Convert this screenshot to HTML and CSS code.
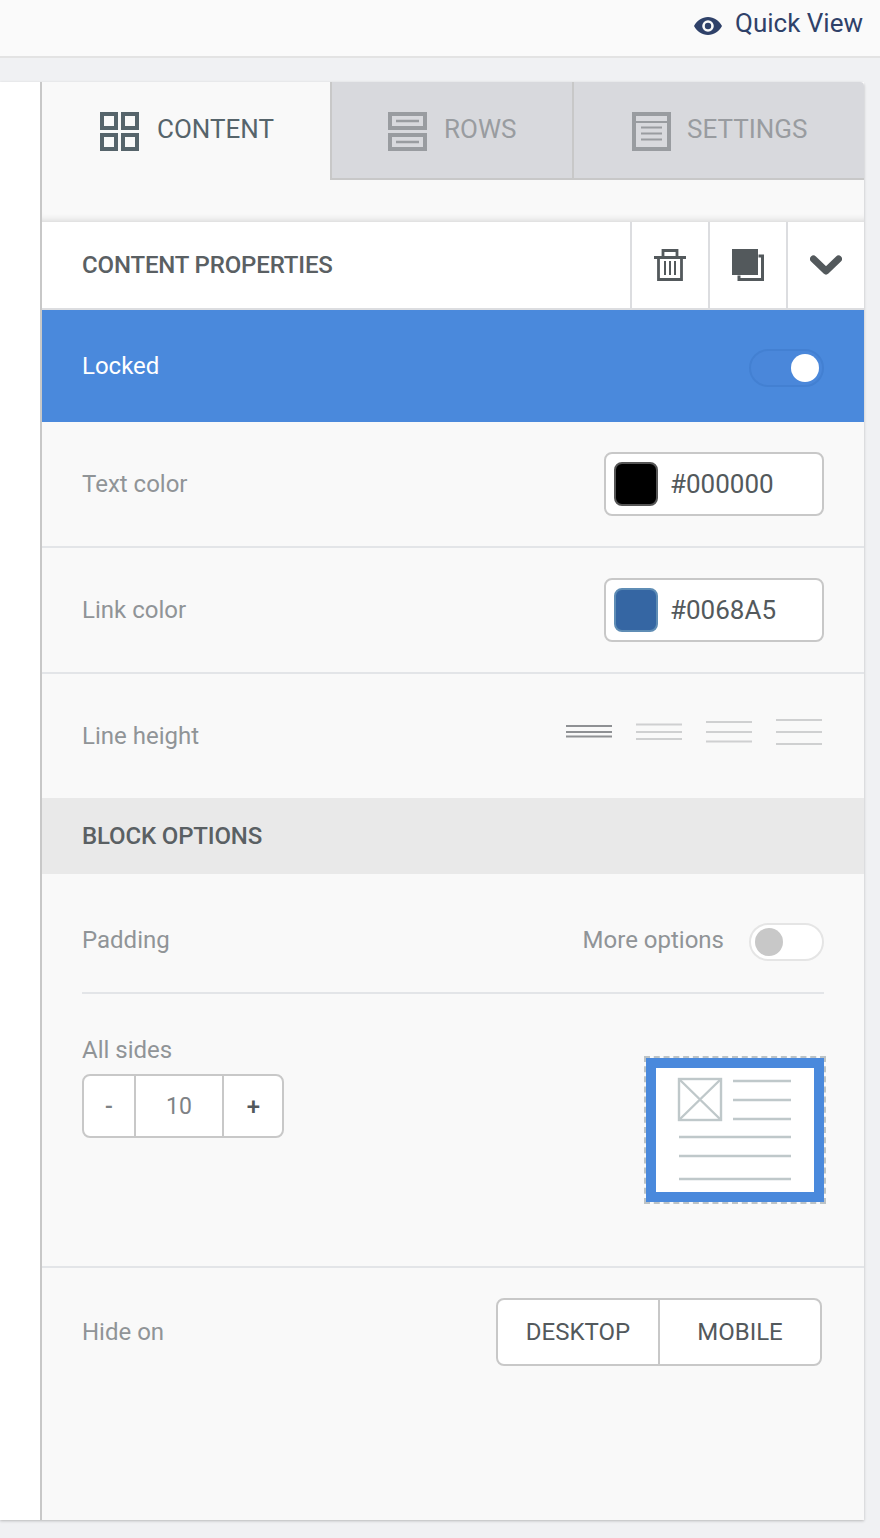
FILE: index.html
```html
<!DOCTYPE html>
<html lang="en">
<head>
<meta charset="utf-8">
<title>Content properties</title>
<link rel="stylesheet" href="styles.css">
</head>
<body>
<header class="topbar">
  <a class="quick-view">
    <svg class="eye" viewBox="0 0 28 18"><path fill="#2f4169" fill-rule="evenodd" d="M14 0C8 0 3 3.600 0 9c3 5.400 8 9 14 9s11-3.600 14-9c-3-5.400-8-9-14-9zm0 3.200a5.800 5.800 0 1 1 0 11.600 5.800 5.800 0 0 1 0-11.600z"/><circle cx="14" cy="9" r="3.200" fill="#2f4169"/></svg>
    <span>Quick View</span>
  </a>
</header>
<main class="workspace">
  <div class="canvas"></div>
  <aside class="panel">
    <nav class="tabs">
      <div class="tab tab-content active">
        <svg class="tab-icon" viewBox="0 0 39 39" fill="none" stroke="#56646b" stroke-width="4"><rect x="2" y="2" width="14" height="14"/><rect x="23" y="2" width="14" height="14"/><rect x="2" y="23" width="14" height="14"/><rect x="23" y="23" width="14" height="14"/></svg>
        <span>CONTENT</span>
      </div>
      <div class="tab tab-rows">
        <svg class="tab-icon" viewBox="0 0 39 39" fill="none" stroke="#999ca0" stroke-width="4"><rect x="2" y="2" width="35" height="14"/><rect x="2" y="23" width="35" height="14"/><path stroke-width="2.500" d="M8 9h23M8 30h23"/></svg>
        <span>ROWS</span>
      </div>
      <div class="tab tab-settings">
        <svg class="tab-icon" viewBox="0 0 39 39" fill="none" stroke="#999ca0" stroke-width="4"><rect x="2" y="2" width="35" height="35"/><path stroke-width="2" d="M3 10h33M9 15.500h21M9 21.500h21M9 27.500h21"/></svg>
        <span>SETTINGS</span>
      </div>
    </nav>
    <div class="tab-gap"></div>
    <section class="props-head">
      <h2>CONTENT PROPERTIES</h2>
      <button class="icon-btn"><svg width="32" height="32" viewBox="0 0 32 32" fill="none" stroke="#53595c" stroke-width="2.800"><path d="M0 8.500h32M9 8V1.500h14V8M4.500 8.500v22h23v-22"/><path stroke-width="2" d="M11 12v14M16 12v14M21 12v14"/></svg></button>
      <button class="icon-btn"><svg width="32" height="32" viewBox="0 0 32 32"><path fill="#53595c" d="M0 0h26v26H0z"/><path fill="none" stroke="#53595c" stroke-width="3" d="M26.500 7h4v23.500H7v-4"/></svg></button>
      <button class="icon-btn"><svg width="32" height="21" viewBox="0 0 32 21" fill="none" stroke="#53595c" stroke-width="7" stroke-linecap="round" stroke-linejoin="round"><path d="M3.500 4L16 16 28.500 4"/></svg></button>
    </section>
    <div class="locked-row">
      <span>Locked</span>
      <div class="switch switch-on"><i></i></div>
    </div>
    <div class="row color-row">
      <label>Text color</label>
      <div class="color-field"><i class="swatch swatch-black"></i><span>#000000</span></div>
    </div>
    <div class="row color-row">
      <label>Link color</label>
      <div class="color-field"><i class="swatch swatch-blue"></i><span>#0068A5</span></div>
    </div>
    <div class="row line-row">
      <label>Line height</label>
      <div class="line-options">
        <svg width="46" height="30" viewBox="0 0 46 30" stroke="#8f9194" stroke-width="2"><path d="M0 9h46M0 15h46M0 19.500h46"/></svg>
        <svg width="46" height="30" viewBox="0 0 46 30" stroke="#cfd0d1" stroke-width="2"><path d="M0 7.500h46M0 15h46M0 22h46"/></svg>
        <svg width="46" height="30" viewBox="0 0 46 30" stroke="#cfd0d1" stroke-width="2"><path d="M0 5h46M0 15h46M0 24.500h46"/></svg>
        <svg width="46" height="30" viewBox="0 0 46 30" stroke="#cfd0d1" stroke-width="2"><path d="M0 3h46M0 15h46M0 27h46"/></svg>
      </div>
    </div>
    <h3 class="section-title">BLOCK OPTIONS</h3>
    <div class="padding-block">
      <div class="padding-head">
        <label>Padding</label>
        <div class="more"><span>More options</span><div class="switch switch-off"><i></i></div></div>
      </div>
      <div class="padding-body">
        <div class="sides">
          <label>All sides</label>
          <div class="stepper"><b class="minus">-</b><span>10</span><b class="plus">+</b></div>
        </div>
        <div class="preview">
          <svg width="158" height="124" viewBox="0 0 158 124" fill="none" stroke="#bfc8ca" stroke-width="2.400">
            <rect x="23" y="11" width="42" height="41"/><path d="M23 11l42 41M65 11L23 52"/>
            <path d="M77 13h58M77 32h58M77 51h58M23 69h112M23 88h112M23 111h112"/>
          </svg>
        </div>
      </div>
    </div>
    <div class="row hide-row">
      <label>Hide on</label>
      <div class="seg"><span>DESKTOP</span><span>MOBILE</span></div>
    </div>
  </aside>
</main>
</body>
</html>
```
FILE: styles.css
```css
* { box-sizing: border-box; }
html, body { margin: 0; height: 1538px; overflow: hidden; }
body { background: #f0f1f3; font-family: Roboto, "Liberation Sans", sans-serif; color: #53595c; }
label { color: #909497; font-size: 24px; }

.topbar { height: 58px; background: #fafafa; border-bottom: 2px solid #e3e3e3; display: flex; justify-content: flex-end; align-items: center; padding: 0 17px 10px 0; }
.quick-view { display: flex; align-items: center; gap: 13px; color: #2f4169; font-size: 26px; }
.eye { width: 28px; height: 18px; margin-top: 5px; }

.workspace { display: flex; margin-top: 24px; height: 1438px; box-shadow: 0 1px 3px rgba(0,0,0,.24); margin-right: 16px; border-radius: 0 4px 0 0; }
.canvas { width: 40px; background: #fff; }
.panel { flex: 1; background: #f9f9f9; border-left: 2px solid #c8c8c8; display: flex; flex-direction: column; }

.tabs { display: flex; height: 98px; }
.tab { display: flex; align-items: flex-start; padding-top: 30px; gap: 17px; background: #d8d9dd; border-bottom: 2px solid #c8c8c8; color: #999ca0; font-size: 26px; }
.tab span { margin-top: 2px; }
.tab-icon { width: 39px; height: 39px; flex: none; }
.tab-content { width: 288px; padding-left: 58px; gap: 18px; background: #f9f9f9; border-bottom: 0; color: #56646b; }
.tab-rows { width: 244px; padding-left: 56px; border-left: 2px solid #c8c8c8; border-right: 2px solid #c8c8c8; }
.tab-settings { flex: 1; padding-left: 58px; gap: 16px; border-radius: 0 4px 0 0; }

.tab-gap { height: 42px; box-shadow: inset 0 -8px 8px -8px rgba(0,0,0,.2); }

.props-head { height: 88px; background: #fff; border-bottom: 2px solid #dcdde0; display: flex; align-items: stretch; }
.props-head h2 { flex: 1; margin: 0; padding-left: 40px; align-self: center; font-size: 24px; font-weight: 500; color: #5a6063; letter-spacing: -.15px; }
.icon-btn { width: 78px; border: 0; border-left: 2px solid #dcdde0; background: #fff; padding: 0; display: flex; align-items: center; justify-content: center; }

.locked-row { height: 112px; background: #4a89dc; color: #fff; font-size: 24px; display: flex; align-items: center; justify-content: space-between; padding: 0 40px; }

.switch { width: 75px; height: 38px; border-radius: 19px; display: flex; align-items: center; padding: 0 3px; margin: 2px 0 -2px; }
.switch i { width: 28px; height: 28px; border-radius: 50%; display: block; }
.switch-on { background: #4a87da; border: 2px solid #4380d2; justify-content: flex-end; }
.switch-on i { background: #fff; }
.switch-off { background: #fff; border: 2px solid #e5e5e5; padding: 0 4px; }
.switch-off i { background: #c8c8c8; }

.row { display: flex; align-items: center; justify-content: space-between; padding: 0 40px; }
.color-row { height: 126px; border-bottom: 2px solid #e3e5e8; }
.color-field { width: 220px; height: 64px; background: #fff; border: 2px solid #c8c8c8; border-radius: 8px; display: flex; align-items: center; gap: 12px; padding-left: 8px; font-size: 26px; color: #53595c; }
.swatch { width: 44px; height: 44px; border-radius: 8px; display: block; }
.swatch-black { background: #000; border: 2px solid #555; }
.swatch-blue { background: #3566a3; border: 2px solid #5f8db5; }

.line-row { height: 124px; padding-right: 42px; }
.line-options { display: flex; gap: 24px; margin-top: -8px; }

.section-title { margin: 0; height: 76px; line-height: 76px; background: #e9e9e9; padding-left: 40px; font-size: 24px; font-weight: 500; color: #5a6063; letter-spacing: -.15px; }

.padding-block { height: 394px; padding: 0 40px; border-bottom: 2px solid #e3e5e8; }
.padding-head { height: 120px; padding-top: 14px; border-bottom: 2px solid #e3e5e8; display: flex; align-items: center; justify-content: space-between; }
.more { display: flex; align-items: center; gap: 25px; color: #909497; font-size: 24px; }
.padding-body { display: flex; justify-content: space-between; padding-top: 40px; }
.sides { display: flex; flex-direction: column; }
.sides label { line-height: 32px; margin-bottom: 8px; }
.stepper { display: flex; width: 202px; height: 64px; background: #fff; border: 2px solid #c8c8c8; border-radius: 8px; align-items: stretch; text-align: center; line-height: 62px; font-size: 23px; color: #7e8285; }
.stepper b { font-weight: 500; width: 50px; }
.stepper span { flex: 1; border-left: 2px solid #c8c8c8; border-right: 2px solid #c8c8c8; }
.stepper .plus { width: 58px; color: #53595c; font-size: 24px; padding-left: 1px; }
.preview { width: 178px; height: 144px; margin-top: 24px; background: #fff; border: 10px solid #4a89dc; outline: 2px dashed #bcc3c6; }
.preview svg { display: block; }

.hide-row { height: 128px; padding-right: 42px; }
.seg { display: flex; width: 326px; height: 68px; background: #fff; border: 2px solid #c8c8c8; border-radius: 8px; font-size: 24px; }
.seg span { flex: 1; display: flex; align-items: center; justify-content: center; }
.seg span + span { border-left: 2px solid #c8c8c8; }
```
